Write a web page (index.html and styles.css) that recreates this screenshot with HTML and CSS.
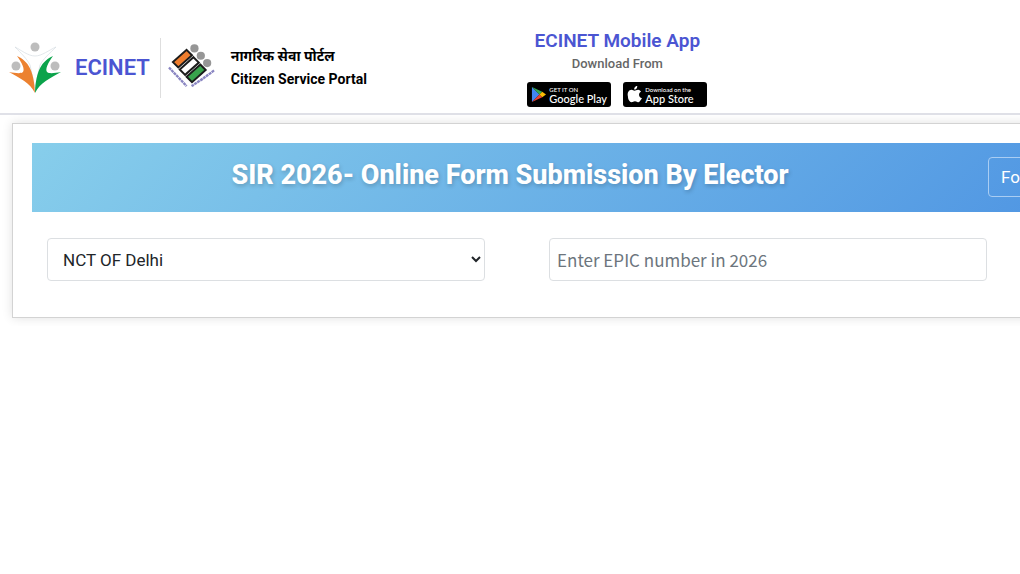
FILE: index.html
```html
<!DOCTYPE html>
<html lang="en">
<head>
  <meta charset="UTF-8">
  <meta name="viewport" content="width=device-width, initial-scale=1">
  <title>SIR 2026- Online Form Submission By Elector</title>
  <link rel="stylesheet" href="styles.css">
</head>
<body>
  <div class="page">
    <header class="header">
      <div class="brand">
        <a class="brand-link" href="#">
          <svg class="ecinet-logo" viewBox="0 0 54 54" aria-hidden="true">
            <circle cx="27" cy="6" r="4.5" fill="#bdbdbd"/>
            <circle cx="8" cy="25" r="4.5" fill="#bdbdbd"/>
            <circle cx="47" cy="25" r="4.5" fill="#bdbdbd"/>
            <path d="M7 6C13 9 20 15 27 15C34 15 41 9 48 6C42 12 35 18 32 24L27 47L22 24C19 18 13 12 7 6Z" fill="#fff" stroke="#d5dde2" stroke-width="0.7"/>
            <path d="M1 31C7 32 13 33 15 31C17 28 14 22 9 15C20 20 26 29 27 52C22 42 12 37 1 31Z" fill="#ec8130"/>
            <path d="M53 31C47 32 41 33 39 31C37 28 40 22 45 15C34 20 28 29 27 52C32 42 42 37 53 31Z" fill="#0ba34b"/>
          </svg>
          <span class="brand-name">ECINET</span>
        </a>
        <div class="portal">
          <svg class="eci-logo" viewBox="0 0 48 48" role="img" aria-label="Election Commission of India">
            <g fill="#969696">
              <circle cx="27" cy="4.5" r="4.2"/>
              <circle cx="33.5" cy="12" r="4.2"/>
              <circle cx="40" cy="19.5" r="4.2"/>
            </g>
            <g stroke="#1c1c1c" stroke-width="2">
              <path d="M19 6L24.5 11.5L10.5 24L5 18.5Z" fill="#ef7d2d"/>
              <path d="M26 13.5L31.5 19L17.5 31.5L12 26Z" fill="#fff"/>
              <path d="M33 21L38.5 26.5L24.5 39L19 33.5Z" fill="#38a34c"/>
            </g>
            <g fill="none" stroke="#8a86c2" stroke-width="2.4" stroke-dasharray="3 0.6">
              <path d="M1 24L19 43"/>
              <path d="M24 43Q34 37 47 27"/>
            </g>
          </svg>
          <div class="portal-text">
            <span lang="hi">नागरिक सेवा पोर्टल</span>
            <span>Citizen Service Portal</span>
          </div>
        </div>
      </div>

      <div class="app">
        <h2>ECINET Mobile App</h2>
        <p>Download From</p>
        <div class="stores">
          <a class="store" href="#">
            <svg class="store-icon" viewBox="0 0 16 18" aria-hidden="true">
              <path d="M1 1L9 9L1 17Z" fill="#4285f4"/>
              <path d="M1 1L12 6L9 9Z" fill="#34a853"/>
              <path d="M1 17L9 9L12 12Z" fill="#ea4335"/>
              <path d="M12 6L16 9L12 12L9 9Z" fill="#fbbc04"/>
            </svg>
            <span class="store-text"><small>GET IT ON</small>Google Play</span>
          </a>
          <a class="store" href="#">
            <svg class="store-icon" viewBox="0 0 16 18" aria-hidden="true">
              <path d="M11 0C11 3 9 4 8 4C7 2 9 0 11 0Z" fill="#fff"/>
              <path d="M8 5C9 5 10 4 12 4C13 4 14 5 15 6C12 7 12 12 16 13C14 16 13 18 11 17C9 16 8 16 6 17C3 18 1 14 1 11C0 7 2 4 5 4C6 4 7 5 8 5Z" fill="#fff"/>
            </svg>
            <span class="store-text"><small>Download on the</small>App Store</span>
          </a>
        </div>
      </div>
    </header>

    <main class="main">
      <section class="card">
        <div class="banner">
          <h1>SIR 2026- Online Form Submission By Elector</h1>
          <button type="button" class="form-btn">Form</button>
        </div>
        <form class="fields">
          <select class="field state" aria-label="State">
            <option>NCT OF Delhi</option>
          </select>
          <input class="field epic" type="text" aria-label="EPIC number" placeholder="Enter EPIC number in 2026">
        </form>
      </section>
    </main>
  </div>
</body>
</html>
```

FILE: styles.css
```css
* { box-sizing: border-box; }
body { margin: 0; font-family: Roboto, "Noto Sans", sans-serif; color: #212529; background: #fff; overflow-x: hidden; }
h1, h2, p { margin: 0; }
a { color: inherit; text-decoration: none; }

/* content is wider than the window */
.page { width: 110%; }

.header { display: grid; grid-template-columns: 47% auto; justify-content: start; padding: 28px 0 6px; border-bottom: 2px solid #e0e1e8; }
.brand { display: flex; align-items: center; padding-left: 8px; }
.brand-link { display: flex; align-items: center; gap: 13px; padding-right: 10px; }
.ecinet-logo { width: 54px; height: 54px; }
.brand-name { font-size: 22px; font-weight: 600; color: #4b55d2; }
.portal { display: flex; align-items: center; gap: 16px; height: 60px; padding-left: 7px; border-left: 1px solid #dedede; }
.eci-logo { width: 47px; height: 47px; }
.portal-text { display: flex; flex-direction: column; font-size: 14px; font-weight: 700; line-height: 23px; color: #000; }

.app { text-align: center; }
.app h2 { font-size: 19px; font-weight: 600; line-height: 26px; color: #4b55d2; }
.app p { font-size: 13px; font-weight: 500; line-height: 20px; color: #666; }
.stores { display: flex; gap: 12px; margin-top: 8px; }
.store { display: flex; align-items: center; gap: 3px; width: 84px; height: 25px; padding: 0 4px; background: #000; border-radius: 3px; color: #fff; }
.store-icon { flex: none; width: 15px; height: 17px; }
.store-text { display: flex; flex-direction: column; font: 500 11px/11px Lato, sans-serif; text-align: left; white-space: nowrap; }
.store-text small { font-size: 6px; line-height: 7px; }

.main { padding: 8px 12px; }
.card { padding: 19px 19px 36px; border: 1px solid #d3d3d3; box-shadow: 0 0 10px rgba(0, 0, 0, 0.12); background: #fff; }
.banner { display: flex; align-items: flex-start; padding: 14px 16px 15px 0; background: linear-gradient(135deg, #87ceeb, #4a90e2 108%); }
.banner h1 { flex: 1; font-size: 27px; font-weight: 800; line-height: 36px; text-align: center; color: #fff; text-shadow: 1px 2px 4px rgba(0, 0, 0, 0.2); }
.form-btn { width: 86px; height: 40px; padding: 0 12px; border: 1px solid #a9cdf3; border-radius: 4px; background: transparent; font: 17px Roboto, sans-serif; text-align: left; color: #fff; }

.fields { display: grid; grid-template-columns: 1fr 1fr; gap: 64px; padding: 26px 103px 0 15px; }
.field { width: 100%; height: 43px; border: 1px solid #dcdfe2; border-radius: 4px; background: #fff; color: #212529; }
.state { padding: 0 0 0 11px; font: 17px Roboto, sans-serif; }
.epic { padding: 0 7px; font: 17px "Noto Sans CJK JP", sans-serif; }
.epic::placeholder { color: #6c757d; }
```
